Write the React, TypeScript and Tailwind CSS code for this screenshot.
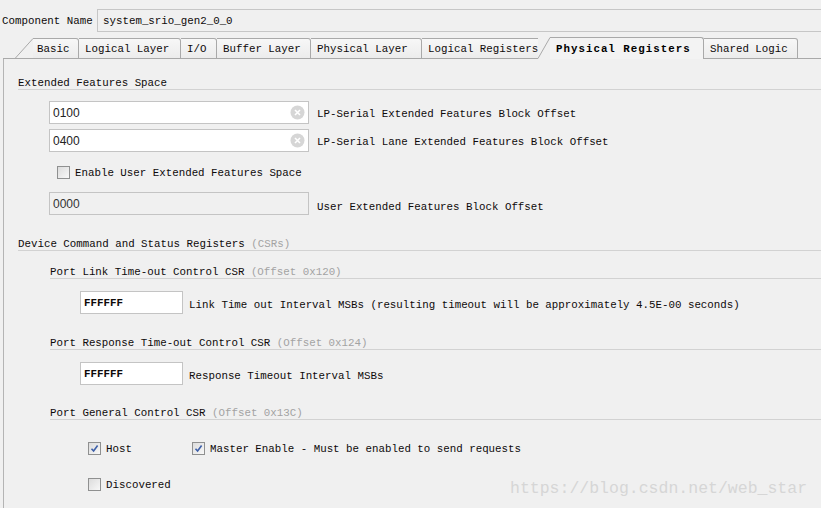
import React from "react";

const Check = ({ checked }: { checked?: boolean }) => (
  <span className="w-[13px] h-[13px] border border-[#8f9090] bg-linear-to-br from-[#dcdcdc] to-[#f8f8f8] flex items-center justify-center shrink-0">
    {checked && (
      <svg width="9" height="9" viewBox="0 0 9 9">
        <path d="M1.5 4.8 L3.6 7 L7.6 1.6" fill="none" stroke="#3d5fa8" strokeWidth="1.6" />
      </svg>
    )}
  </span>
);

const ClearIcon = () => (
  <svg width="15" height="15" viewBox="0 0 15 15">
    <circle cx="7.5" cy="7.5" r="7" fill="#d6d6d6" />
    <path d="M5 5 L10 10 M10 5 L5 10" stroke="#ffffff" strokeWidth="1.6" />
  </svg>
);

const Heading = ({ title, sub, indent }: { title: string; sub?: string; indent?: boolean }) => (
  <div className={`flex h-[13px] border-b border-[#d2d2d2] whitespace-pre ${indent ? "ml-[32px]" : ""}`}>
    <span>{title}</span>
    {sub && <span className="text-[#a3a3a3]"> {sub}</span>}
  </div>
);

const Tab = ({ label, w, last }: { label: string; w: string; last?: boolean }) => (
  <div
    className={`${w} h-[21px] border-t border-b border-[#a9a9a9] ${last ? "" : "border-r rounded-tr-[3px]"} bg-linear-to-b from-[#f7f7f7] to-[#ececec] flex items-center pl-[6px] whitespace-pre`}
  >
    {label}
  </div>
);

export default function App() {
  return (
    <div className="w-[821px] h-[508px] bg-[#f0f0f0] overflow-hidden relative font-[family-name:Liberation_Mono,Courier_New,monospace] text-[10.8px] leading-[12px] text-[#0e0a0a]">
      {/* header */}
      <div className="flex items-center pt-[9px] h-[32px]">
        <div className="w-[97px] pl-[2px] whitespace-pre">Component Name</div>
        <div className="flex-1 h-[23px] border border-r-0 border-[#c6c6c6] flex items-center pl-[5px]">
          system_srio_gen2_0_0
        </div>
      </div>

      {/* tabs */}
      <div className="mt-[5px] flex items-end h-[22px]">
        <div className="w-[3px] h-[21px]" />
        <div className="w-[12px] h-[21px] border-b border-[#a9a9a9]" />
        <svg width="18" height="21" viewBox="0 0 18 21" className="shrink-0">
          <path d="M0 20.5 L18 20.5" stroke="#a9a9a9" />
          <path d="M0 20.5 L18 0.5" stroke="#a9a9a9" fill="none" />
        </svg>
        <div className="w-[46px] h-[21px] border-t border-b border-r border-[#a9a9a9] rounded-tr-[3px] bg-linear-to-b from-[#f7f7f7] to-[#ececec] flex items-center pl-[4px]">
          Basic
        </div>
        <Tab label="Logical Layer" w="w-[102px]" />
        <Tab label="I/O" w="w-[36px]" />
        <Tab label="Buffer Layer" w="w-[94px]" />
        <Tab label="Physical Layer" w="w-[111px]" />
        <Tab label="Logical Registers" w="w-[116px]" last />
        <svg width="12" height="22" viewBox="0 0 12 22" className="shrink-0">
          <path d="M0 21.5 L12 0.5" stroke="#a9a9a9" fill="none" />
        </svg>
        <div className="w-[154px] h-[22px] border-t border-r border-[#a9a9a9] rounded-tr-[3px] bg-[#f3f3f3] flex items-center pl-[6px] font-bold tracking-[1px] text-[#000]">
          Physical Registers
        </div>
        <Tab label="Shared Logic" w="w-[94px]" />
        <div className="flex-1 h-[21px] border-b border-[#a9a9a9]" />
      </div>

      {/* panel */}
      <div className="ml-[3px] border-l border-[#b4b4b4] pl-[14px] h-[449px] flex flex-col">
        <div className="mt-[18px]">
          <Heading title="Extended Features Space" />
        </div>

        <div className="mt-[11px] flex items-center">
          <div className="ml-[31px] w-[260px] h-[23px] bg-white border border-[#c4c4c4] flex items-center justify-between pl-[3px] pr-[3px] font-[family-name:Liberation_Sans,Arial,sans-serif] text-[12px] text-[#222]">
            <span>0100</span>
            <ClearIcon />
          </div>
          <span className="ml-[8px] whitespace-pre mt-[3px]">LP-Serial Extended Features Block Offset</span>
        </div>

        <div className="mt-[5px] flex items-center">
          <div className="ml-[31px] w-[260px] h-[23px] bg-white border border-[#c4c4c4] flex items-center justify-between pl-[3px] pr-[3px] font-[family-name:Liberation_Sans,Arial,sans-serif] text-[12px] text-[#222]">
            <span>0400</span>
            <ClearIcon />
          </div>
          <span className="ml-[8px] whitespace-pre mt-[3px]">LP-Serial Lane Extended Features Block Offset</span>
        </div>

        <div className="mt-[13px] h-[15px] flex items-center ml-[39px]">
          <Check />
          <span className="ml-[5px] whitespace-pre">Enable User Extended Features Space</span>
        </div>

        <div className="mt-[12px] flex items-center">
          <div className="ml-[31px] w-[260px] h-[23px] bg-[#f0f0f0] border border-[#c4c4c4] flex items-center pl-[3px] font-[family-name:Liberation_Sans,Arial,sans-serif] text-[12px] text-[#333]">
            0000
          </div>
          <span className="ml-[8px] whitespace-pre mt-[6px]">User Extended Features Block Offset</span>
        </div>

        <div className="mt-[23px]">
          <Heading title="Device Command and Status Registers" sub="(CSRs)" />
        </div>

        <div className="mt-[15px]">
          <Heading title="Port Link Time-out Control CSR" sub="(Offset 0x120)" indent />
        </div>

        <div className="mt-[12px] flex items-center">
          <div className="ml-[62px] w-[103px] h-[23px] bg-white border border-[#c4c4c4] flex items-center pl-[3px] font-bold">
            FFFFFF
          </div>
          <span className="ml-[6px] whitespace-pre mt-[4px]">
            Link Time out Interval MSBs (resulting timeout will be approximately 4.5E-00 seconds)
          </span>
        </div>

        <div className="mt-[23px]">
          <Heading title="Port Response Time-out Control CSR" sub="(Offset 0x124)" indent />
        </div>

        <div className="mt-[12px] flex items-center">
          <div className="ml-[62px] w-[103px] h-[23px] bg-white border border-[#c4c4c4] flex items-center pl-[3px] font-bold">
            FFFFFF
          </div>
          <span className="ml-[6px] whitespace-pre mt-[4px]">Response Timeout Interval MSBs</span>
        </div>

        <div className="mt-[22px]">
          <Heading title="Port General Control CSR" sub="(Offset 0x13C)" indent />
        </div>

        <div className="mt-[21px] h-[15px] flex items-center ml-[70px]">
          <div className="w-[104px] flex items-center">
            <Check checked />
            <span className="ml-[5px]">Host</span>
          </div>
          <Check checked />
          <span className="ml-[5px] whitespace-pre">Master Enable - Must be enabled to send requests</span>
        </div>

        <div className="mt-[21px] h-[15px] flex items-center ml-[70px]">
          <Check />
          <span className="ml-[5px]">Discovered</span>
        </div>
      </div>

      {/* watermark */}
      <div className="absolute left-[510px] top-[479px] text-[16.5px] leading-[20px] text-[#d6d6d6] font-[family-name:Liberation_Mono,Courier_New,monospace] whitespace-pre">
        https://blog.csdn.net/web_star
      </div>
    </div>
  );
}
